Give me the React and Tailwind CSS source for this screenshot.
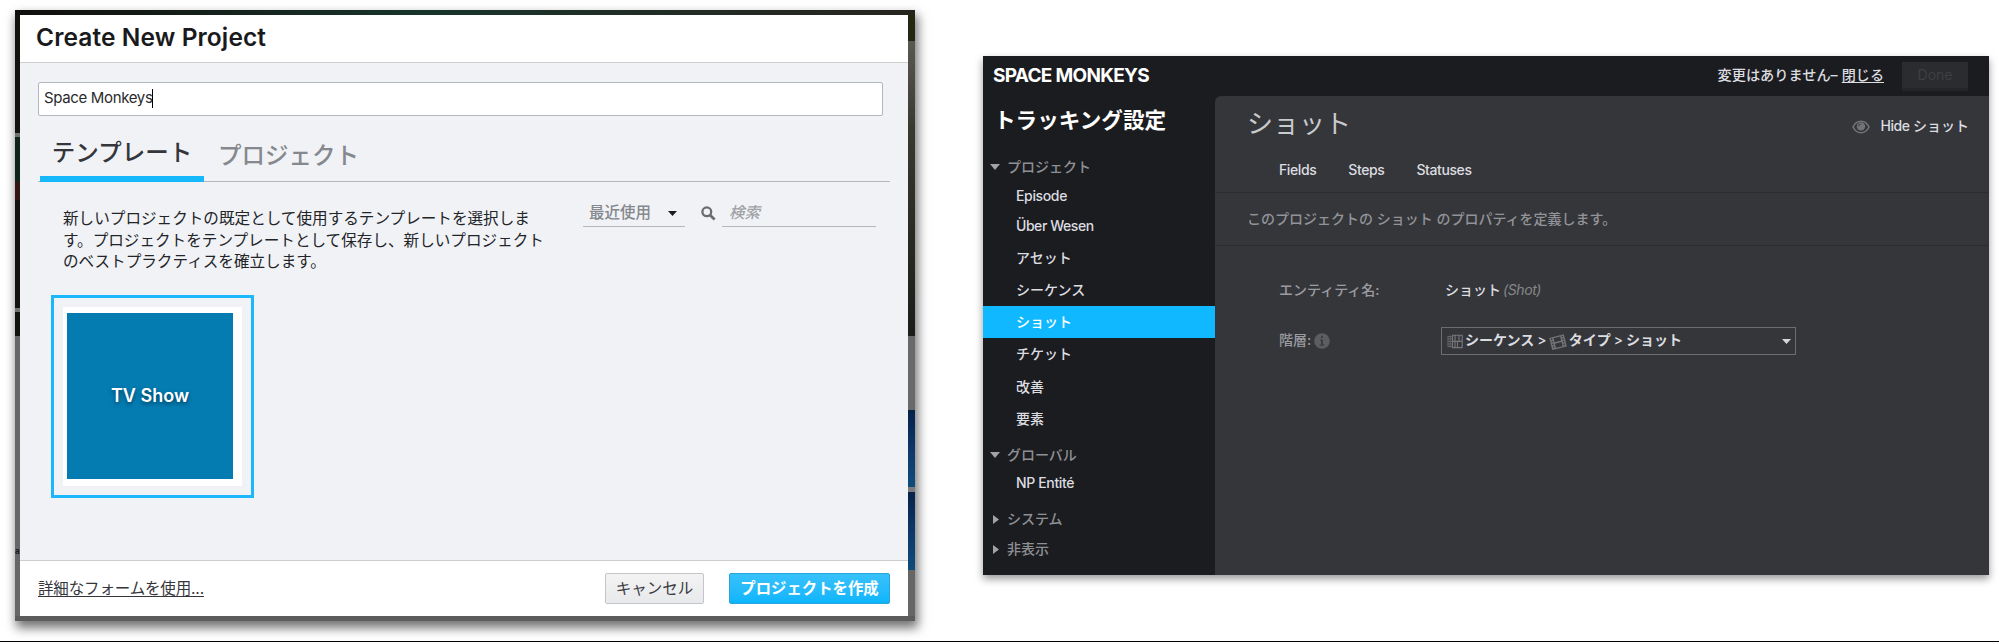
import React from "react";

const jp = "font-['Inter','Noto_Sans_CJK_JP',sans-serif]";

function CaretDown({ className }) {
  return (
    <svg viewBox="0 0 10 6" preserveAspectRatio="none" className={className} fill="currentColor">
      <path d="M0 0H10L5 6Z" />
    </svg>
  );
}

function CaretRight({ className }) {
  return (
    <svg viewBox="0 0 6 10" preserveAspectRatio="none" className={className} fill="currentColor">
      <path d="M0 0L6 5L0 10Z" />
    </svg>
  );
}

function SearchIcon() {
  return (
    <svg viewBox="0 0 15 15" className="h-[15px] w-[15px]" fill="none" stroke="#6a6c6f">
      <circle cx="5.8" cy="5.8" r="4.4" strokeWidth="2.3" />
      <path d="M9.2 9.2L13.6 13.6" strokeWidth="2.8" />
    </svg>
  );
}

function EyeIcon() {
  return (
    <svg viewBox="0 0 18 14" className="mt-[6px] h-[14px] w-[18px]">
      <path d="M1 7C4.6-.6 13.4-.6 17 7C13.4 14.6 4.6 14.6 1 7Z" fill="none" stroke="#727376" strokeWidth="1.6" />
      <circle cx="9" cy="6.4" r="4.2" fill="#727376" />
      <path d="M6.6 6.2A2.4 2.4 0 0 1 8.8 4" fill="none" stroke="#35363a" strokeWidth="1" />
    </svg>
  );
}

function InfoIcon() {
  return (
    <svg viewBox="0 0 16 16" className="h-4 w-4">
      <circle cx="8" cy="8" r="7.8" fill="#5c5d60" />
      <path d="M7 3H9V5H7ZM6 6.5H9V11.5H10.2V12.8H5.8V11.5H7V7.8H6Z" fill="#3c3d41" />
    </svg>
  );
}

function SequenceIcon() {
  return (
    <svg viewBox="0 0 16 15" className="h-[15px] w-4" fill="none" stroke="#77787b">
      <path d="M.6 2.5H5M.6 5H5M.6 7.5H5M.6 10H5M.6 12.5H5M1 2V13M3.2 1.5V13.5" strokeWidth=".8" opacity=".8" />
      <path d="M5.5 1.2H15.2V13.6H5.5ZM5.5 7.4H15.2M8 1.2V13.6M12 1.2V7.4M10.5 7.4V13.6" strokeWidth="1.1" />
    </svg>
  );
}

function ShotIcon() {
  return (
    <svg viewBox="0 0 18 16" className="mt-[2px] h-4 w-[18px]">
      <g transform="rotate(-14 9 8)">
        <rect x="1.5" y="2" width="15" height="12.4" fill="#737477" />
        <rect x="5.6" y="3.2" width="6.8" height="4.2" fill="#35363a" />
        <rect x="5.6" y="8.9" width="6.8" height="4.2" fill="#35363a" />
        <path d="M3.5 3V14M14.5 3V14" stroke="#35363a" strokeWidth="1.3" strokeDasharray="1.4 1.3" />
      </g>
    </svg>
  );
}

function CreateProject() {
  return (
    <section className="mt-[10px] ml-[15px] flex h-[611px] w-[900px] flex-col bg-[#5c5c5c] shadow-[2px_6px_10px_1px_rgba(0,0,0,0.55)]">
      <div className="h-[5px] bg-linear-to-r from-[#100f0d] via-[#16342b] via-45% to-[#27241f]" />
      <div className="flex h-[601px]">
        <div className="flex w-[5px] flex-col">
          <div className="h-[118px] bg-[#14120f]" />
          <div className="h-[4px] bg-[#6f7472]" />
          <div className="h-[45px] bg-[#0e2419]" />
          <div className="h-[18px] bg-[#331512]" />
          <div className="h-[108px] bg-[#14120f]" />
          <div className="h-[4px] bg-[#6f7472]" />
          <div className="h-[24px] bg-[#10150c]" />
          <div className="flex h-[280px] flex-col bg-[#676767] pt-[209px] text-[8px] leading-[12px] font-bold text-[#1b1b1b]">
            <span className={jp}>a</span>
          </div>
        </div>
        <div className="flex w-[888px] flex-col bg-white">
          <header className="flex h-[48px] items-center border-b border-[#cfd0d2] pb-[2px] pl-4">
            <h1 className={`${jp} text-[24.5px] leading-none font-semibold tracking-[0.1px] text-[#1a1a1c]`}>Create New Project</h1>
          </header>
          <div className="flex h-[498px] flex-col border-b border-[#cdced1] bg-[#f0f2f6] pt-[19px] pl-[18px]">
            <div className="flex h-[34px] w-[845px] items-center rounded-[2px] border border-[#b3b6bb] bg-white pb-[2px] pl-[5px]">
              <span className={`${jp} text-[15px] leading-5 tracking-[-0.35px] text-[#2a2a2c]`}>Space Monkeys</span>
              <span className="h-[19px] w-px bg-black" />
            </div>
            <nav className="mt-[15px] flex h-[51px] w-[852px] border-b border-[#b5b7ba] pl-[2px]">
              <div className="-mb-px flex h-[51px] w-[164px] justify-center border-b-[6px] border-[#14b8fb]">
                <span className={`${jp} mt-[5px] text-[23.5px] leading-[34px] font-medium text-[#35363c]`}>テンプレート</span>
              </div>
              <span className={`${jp} mt-[8px] ml-[14px] text-[23.5px] leading-[34px] font-medium text-[#85888d]`}>プロジェクト</span>
            </nav>
            <div className="flex h-[100px]">
              <p className={`${jp} mt-[26px] ml-[25px] w-[496px] text-[15.6px] leading-[21.5px] text-[#232428]`}>
                新しいプロジェクトの既定として使用するテンプレートを選択しま<br />
                す。プロジェクトをテンプレートとして保存し、新しいプロジェクト<br />
                のベストプラクティスを確立します。
              </p>
              <div className="mt-[18px] ml-[24px] flex h-[27px] w-[102px] items-center border-b border-[#b5b7ba] pl-[6px] text-[#85888d]">
                <span className={`${jp} text-[15.5px] leading-5 font-medium`}>最近使用</span>
                <CaretDown className="ml-[17px] h-[5px] w-[9px] text-[#1c1c1e]" />
              </div>
              <div className="mt-[24px] ml-[16px]">
                <SearchIcon />
              </div>
              <div className="mt-[18px] ml-[6px] flex h-[27px] w-[154px] items-center border-b border-[#b5b7ba] pl-[7px]">
                <span className={`${jp} text-[15.5px] leading-5 font-medium text-[#a0a2a6] italic`}>検索</span>
              </div>
            </div>
            <div className="mt-[13px] ml-[13px] flex h-[203px] w-[203px] border-[3.5px] border-[#1bb9fb] bg-[#f0f2f6] p-[9px]">
              <div className="flex h-[179px] w-[179px] bg-white pt-[6px] pl-[4px]">
                <div className={`${jp} flex h-[166px] w-[166px] items-center justify-center bg-[#047cb2] pb-[2px] text-[18px] font-semibold text-white [text-shadow:0_2px_4px_rgba(0,0,0,0.5)]`}>TV Show</div>
              </div>
            </div>
          </div>
          <footer className="flex h-[55px] items-center pr-[18px] pl-[18px]">
            <a className={`${jp} mr-auto text-[15.5px] leading-5 tracking-[-0.15px] text-[#35363c] underline underline-offset-2`}>詳細なフォームを使用...</a>
            <button className={`${jp} h-[31px] w-[99px] rounded-[2px] border border-[#c3c5c8] bg-linear-to-b from-[#f3f3f4] to-[#e8e9eb] text-[15.5px] leading-5 text-[#3a3b3e]`}>キャンセル</button>
            <button className={`${jp} ml-[25px] h-[31px] w-[161px] rounded-[2px] border border-[#2aa5dc] bg-linear-to-b from-[#37c1fb] to-[#0bb5fb] text-[15.4px] leading-5 font-bold text-white`}>プロジェクトを作成</button>
          </footer>
        </div>
        <div className="flex w-[7px] flex-col">
          <div className="h-[26px] bg-[#24280f]" />
          <div className="h-[295px] bg-linear-to-b from-[#5a5852] via-[#3a3930] via-30% to-[#1c1d19]" />
          <div className="h-[74px] bg-[#696969]" />
          <div className="h-[77px] bg-linear-to-b from-[#06224a] via-[#0d3768] to-[#0d4c7c]" />
          <div className="h-[5px] bg-[#7c7c7c]" />
          <div className="h-[78px] bg-linear-to-b from-[#06224a] via-[#0d3768] to-[#0d4c7c]" />
          <div className="h-[46px] bg-[#666666]" />
        </div>
      </div>
    </section>
  );
}

function Section({ open, className, children }) {
  return (
    <div className={`flex items-center pl-[7px] font-medium text-[#8f9096] ${className}`}>
      <span className="flex w-[17px]">
        {open ? <CaretDown className="h-[6px] w-[10px] text-[#a2a3a7]" /> : <CaretRight className="ml-[3px] h-[9px] w-[6px] text-[#a2a3a7]" />}
      </span>
      <span>{children}</span>
    </div>
  );
}

function Item({ className, children }) {
  return <div className={`flex items-center pl-[33px] font-medium ${className}`}>{children}</div>;
}

function TrackingSettings() {
  return (
    <section className={`${jp} mt-[56px] ml-[68px] flex h-[519px] w-[1006px] flex-col bg-[#1b1c1f] text-[14px] leading-5 text-[#dcdde0] shadow-[0_4px_8px_rgba(0,0,0,0.4)]`}>
      <header className="flex h-[40px] items-center pb-[2px] pl-[10px]">
        <h1 className="mr-auto text-[19px] leading-none font-bold tracking-[-0.7px] text-white">SPACE MONKEYS</h1>
        <span className="text-[14.2px] font-medium">変更はありません–</span>
        <a className="ml-[4px] text-[14.1px] font-medium underline underline-offset-2">閉じる</a>
        <button className="mt-[2px] mr-[21px] ml-[18px] h-[29px] w-[66px] border-b-[3px] border-[#242528] bg-[#2b2c30] text-[14px] leading-none text-[#3e3f43]">Done</button>
      </header>
      <div className="flex h-[479px]">
        <aside className="flex w-[232px] flex-col">
          <h2 className="flex h-[50px] items-center pl-[11px] text-[21.6px] leading-none font-bold text-white">トラッキング設定</h2>
          <Section open className="mt-[6px] h-[29px]">プロジェクト</Section>
          <Item className="h-[30px] tracking-[-0.35px]">Episode</Item>
          <Item className="h-[31px] pb-[2px] tracking-[-0.45px]">Über Wesen</Item>
          <Item className="h-[32px] pb-px">アセット</Item>
          <Item className="h-[32px]">シーケンス</Item>
          <Item className="h-[32px] bg-[#10b9ff] text-white">ショット</Item>
          <Item className="h-[33px] pb-px">チケット</Item>
          <Item className="h-[32px]">改善</Item>
          <Item className="h-[32px]">要素</Item>
          <Section open className="mt-[6px] h-[29px] pb-px">グローバル</Section>
          <Item className="h-[27px] pb-px tracking-[-0.35px]">NP Entité</Item>
          <Section className="mt-[7px] h-[30px]">システム</Section>
          <Section className="h-[30px]">非表示</Section>
        </aside>
        <main className="flex w-[774px] flex-col rounded-tl-[6px] bg-[#35363a]">
          <div className="flex h-[56px] items-center pl-[32px]">
            <h2 className="mr-auto text-[26px] leading-none font-normal text-[#c9cacd]">ショット</h2>
            <EyeIcon />
            <span className="mt-[4px] mr-[20px] ml-[10px] font-medium"><span className="tracking-[-0.4px]">Hide </span>ショット</span>
          </div>
          <nav className="flex h-[41px] items-center gap-[32px] border-b border-[#2b2c2f] pb-[4px] pl-[64px] font-medium tracking-[-0.4px]">
            <span>Fields</span>
            <span>Steps</span>
            <span>Statuses</span>
          </nav>
          <p className="flex h-[53px] items-center border-b border-[#2b2c2f] pb-px pl-[32px] font-medium whitespace-pre text-[#929399]">このプロジェクトの ショット のプロパティを定義します。</p>
          <div className="mt-[28px] flex h-[31px] items-center pl-[64px]">
            <span className="w-[166px] font-medium text-[#9b9ca1]">エンティティ名:</span>
            <span className="font-medium">ショット</span>
            <span className="ml-[2px] tracking-[-0.4px] text-[#85868a] italic">(Shot)</span>
          </div>
          <div className="mt-[22px] flex h-[28px] items-center pl-[64px]">
            <span className="flex w-[162px] items-center gap-[3px] font-medium text-[#9b9ca1]">
              <span className="-mt-[3px]">階層:</span>
              <InfoIcon />
            </span>
            <div className="flex h-[28px] w-[355px] items-center border border-[#6c6d71] pl-[5px] font-semibold">
              <SequenceIcon />
              <span className="-mt-[3px] ml-[2px]">シーケンス</span>
              <span className="-mt-[3px] ml-[3px] font-medium">&gt;</span>
              <span className="ml-[2px] flex"><ShotIcon /></span>
              <span className="-mt-[3px] ml-[2px]">タイプ</span>
              <span className="-mt-[3px] ml-[3px] font-medium">&gt;</span>
              <span className="-mt-[3px] ml-[3px]">ショット</span>
              <CaretDown className="mr-[4px] ml-auto h-[5px] w-[9px] text-[#d5d6d9]" />
            </div>
          </div>
        </main>
      </div>
    </section>
  );
}

export default function App() {
  return (
    <div className="flex h-[642px] w-[1999px] items-start overflow-hidden border-b border-black bg-white">
      <CreateProject />
      <TrackingSettings />
    </div>
  );
}
